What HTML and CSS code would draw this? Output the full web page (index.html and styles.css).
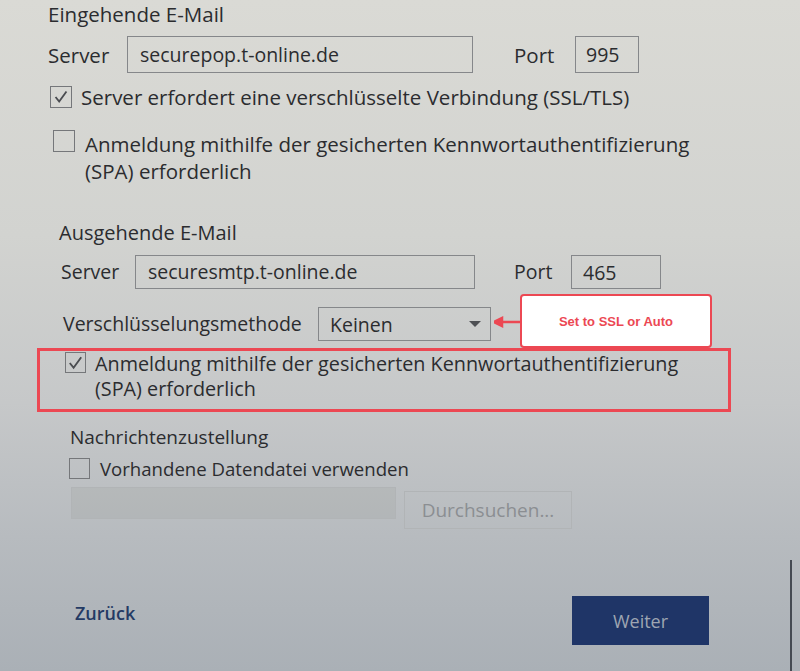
FILE: index.html
```html
<!DOCTYPE html>
<html lang="de">
<head>
    <meta charset="UTF-8">
    <meta name="viewport" content="width=device-width, initial-scale=1.0">
    <title>Kontoeinstellungen</title>
    <link rel="stylesheet" href="styles.css">
</head>
<body>
    <div class="screen">
        <section class="incoming">
            <h2 class="group-title">Eingehende E-Mail</h2>
            <div class="field-row">
                <span class="field-label">Server</span>
                <div class="textbox server-box">securepop.t-online.de</div>
                <span class="field-label port-label">Port</span>
                <div class="textbox port-box">995</div>
            </div>
            <div class="check-row ssl-row">
                <span class="checkbox">
                    <svg viewBox="0 0 22 22" width="22" height="22"><polyline points="5,11 9,16 17,5" /></svg>
                </span>
                <span class="check-text">Server erfordert eine verschlüsselte Verbindung (SSL/TLS)</span>
            </div>
            <div class="check-row spa-row">
                <span class="checkbox"></span>
                <span class="check-text">Anmeldung mithilfe der gesicherten Kennwortauthentifizierung<br>(SPA) erforderlich</span>
            </div>
        </section>

        <section class="outgoing">
            <h2 class="group-title">Ausgehende E-Mail</h2>
            <div class="field-row">
                <span class="field-label">Server</span>
                <div class="textbox server-box">securesmtp.t-online.de</div>
                <span class="field-label port-label">Port</span>
                <div class="textbox port-box">465</div>
            </div>
            <div class="method-row">
                <span class="field-label method-label">Verschlüsselungsmethode</span>
                <div class="select">
                    <span>Keinen</span>
                    <span class="select-arrow"></span>
                </div>
                <svg class="callout-arrow" viewBox="0 0 28 12" width="28" height="12">
                    <line x1="6" y1="6" x2="28" y2="6" />
                    <polygon points="0,6 8,2 8,10" />
                </svg>
                <div class="callout">Set to SSL or Auto</div>
            </div>
        </section>

        <div class="highlight">
            <div class="check-row">
                <span class="checkbox">
                    <svg viewBox="0 0 20 20" width="20" height="20"><polyline points="4,10 8,15 16,4" /></svg>
                </span>
                <span class="check-text">Anmeldung mithilfe der gesicherten Kennwortauthentifizierung<br>(SPA) erforderlich</span>
            </div>
        </div>

        <section class="delivery">
            <h3 class="sub-title">Nachrichtenzustellung</h3>
            <div class="check-row data-row">
                <span class="checkbox"></span>
                <span class="check-text">Vorhandene Datendatei verwenden</span>
            </div>
            <div class="file-row">
                <div class="textbox disabled-box"></div>
                <div class="browse-btn">Durchsuchen...</div>
            </div>
        </section>

        <footer class="footer">
            <span class="back-link">Zurück</span>
            <div class="next-btn">Weiter</div>
        </footer>

        <div class="frame-edge"></div>
    </div>
</body>
</html>
```

FILE: styles.css
```css
body {
    margin: 0;
    font-family: "Open Sans", "Noto Sans", sans-serif;
    color: #2b2c2f;
}
.screen {
    position: relative;
    width: 800px;
    height: 671px;
    overflow: hidden;
    background: linear-gradient(180deg, #dadad5 0%, #d2d3d0 35%, #c6c8c9 60%, #b7bbbf 80%, #aab0b6 100%);
}
.group-title {
    margin: 0;
    font-size: 20.5px;
    font-weight: 400;
    line-height: 24px;
}
.incoming {
    padding: 2px 0 0 48px;
}
.field-row {
    display: flex;
    align-items: center;
}
.field-label {
    font-size: 20.5px;
    line-height: 24px;
}
.textbox {
    box-sizing: border-box;
    display: flex;
    align-items: center;
    border: 1.5px solid #85878a;
    font-size: 19.5px;
}
.incoming .field-row {
    margin-top: 10px;
    height: 37px;
}
.incoming .field-label {
    width: 79px;
}
.incoming .server-box {
    width: 346px;
    height: 37px;
    padding-left: 12px;
}
.incoming .port-label {
    margin-left: 41px;
    width: 61px;
}
.incoming .port-box {
    width: 64px;
    height: 37px;
    padding-left: 10px;
}
.check-row {
    display: flex;
    align-items: center;
    font-size: 20.5px;
}
.checkbox {
    box-sizing: border-box;
    flex: none;
    width: 22px;
    height: 22px;
    border: 1.5px solid #75777a;
    display: flex;
    align-items: center;
    justify-content: center;
}
.checkbox svg {
    fill: none;
    stroke: #4a4c50;
    stroke-width: 2;
}
.ssl-row {
    margin-top: 13px;
    margin-left: 2px;
    height: 22px;
}
.ssl-row .check-text {
    margin-left: 9px;
}
.spa-row {
    margin-top: 22px;
    margin-left: 5px;
    align-items: flex-start;
}
.spa-row .check-text {
    margin-left: 10px;
    margin-top: 1px;
    line-height: 27px;
}

.outgoing {
    position: relative;
    margin-top: 36px;
    padding-left: 59px;
}
.outgoing .group-title {
    font-size: 20px;
}
.outgoing .field-row {
    margin-top: 9px;
    height: 35px;
    padding-left: 2px;
}
.outgoing .field-label {
    font-size: 19.5px;
    width: 74px;
}
.outgoing .server-box {
    width: 340px;
    height: 34px;
    padding-left: 12px;
}
.outgoing .port-label {
    margin-left: 39px;
    width: 57px;
}
.outgoing .port-box {
    width: 90px;
    height: 34px;
    padding-left: 11px;
    align-self: flex-end;
}
.method-row {
    position: relative;
    display: flex;
    align-items: center;
    margin-top: 18px;
    padding-left: 4px;
    height: 34px;
}
.outgoing .method-label {
    width: 255px;
}
.select {
    box-sizing: border-box;
    width: 173px;
    height: 34px;
    border: 1.5px solid #85878a;
    display: flex;
    align-items: center;
    justify-content: space-between;
    padding: 0 9px 0 11px;
    font-size: 19.5px;
}
.select-arrow {
    width: 0;
    height: 0;
    border-left: 6px solid transparent;
    border-right: 6px solid transparent;
    border-top: 6px solid #4e5054;
}
.callout-arrow {
    position: absolute;
    left: 435px;
    top: 9px;
    fill: #ec4853;
    stroke: #ec4853;
    stroke-width: 2.5;
}
.callout {
    position: absolute;
    left: 461px;
    top: -13px;
    box-sizing: border-box;
    width: 192px;
    height: 54px;
    background: #ffffff;
    border: 2.5px solid #ec4853;
    border-radius: 4px;
    display: flex;
    align-items: center;
    justify-content: center;
    font-family: "Liberation Sans", Arial, sans-serif;
    font-size: 13px;
    font-weight: 700;
    color: #ec4853;
}

.highlight {
    box-sizing: border-box;
    margin: 7px 0 0 37px;
    width: 694px;
    height: 64px;
    border: 3px solid #ec4853;
    padding: 0 0 0 25px;
}
.highlight .check-row {
    align-items: flex-start;
    font-size: 19.8px;
}
.highlight .checkbox {
    width: 21px;
    height: 21px;
    margin-top: 1px;
}
.highlight .check-text {
    margin-left: 9px;
    margin-top: 0;
    line-height: 25px;
}

.delivery {
    padding-left: 69px;
}
.sub-title {
    margin: 14px 0 0 1px;
    font-size: 19px;
    font-weight: 400;
    line-height: 23px;
}
.data-row {
    margin-top: 9px;
    height: 21px;
    font-size: 18.6px;
}
.data-row .checkbox {
    width: 21px;
    height: 21px;
}
.data-row .check-text {
    margin-left: 10px;
}
.file-row {
    display: flex;
    align-items: flex-start;
    margin-top: 8px;
    padding-left: 2px;
}
.disabled-box {
    width: 325px;
    height: 32px;
    border-color: #b1b4b6;
    background: rgba(160, 163, 160, 0.25);
}
.browse-btn {
    box-sizing: border-box;
    margin: 4px 0 0 8px;
    width: 168px;
    height: 38px;
    border: 1.5px solid #b1b4b6;
    display: flex;
    align-items: center;
    justify-content: center;
    font-size: 19px;
    color: #8b8e92;
}

.footer {
    display: flex;
    align-items: flex-start;
    justify-content: space-between;
    margin-top: 67px;
    padding: 0 91px 0 75px;
}
.back-link {
    margin-top: 6px;
    font-size: 18px;
    line-height: 22px;
    font-weight: 600;
    color: #243a64;
}
.next-btn {
    width: 137px;
    height: 49px;
    background: #1f3567;
    display: flex;
    align-items: center;
    justify-content: center;
    font-size: 18px;
    color: #9ea5b2;
}
.frame-edge {
    position: absolute;
    left: 790px;
    top: 560px;
    width: 2px;
    height: 111px;
    background: #454a52;
}
```
